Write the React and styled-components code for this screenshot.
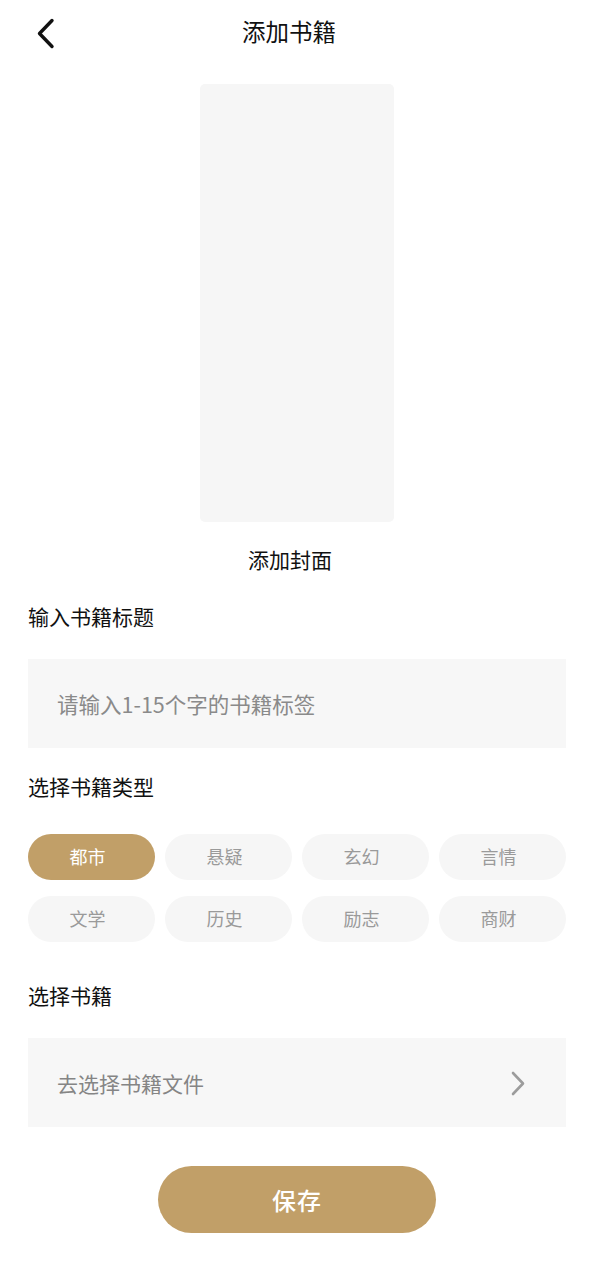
import React, { useState } from "react";
import styled, { createGlobalStyle } from "styled-components";

const Global = createGlobalStyle`
  html, body { margin: 0; padding: 0; background: #fff; }
  body { font-family: "Noto Sans CJK SC", "Noto Sans", sans-serif; color: #111; }
  * { box-sizing: border-box; }
`;

const Page = styled.div`
  width: 594px;
  min-height: 1280px;
  background: #fff;
  display: flex;
  flex-direction: column;
`;

const Header = styled.header`
  height: 66px;
  display: flex;
  align-items: center;
  justify-content: center;
  position: relative;
  padding-right: 16px;
`;

const BackButton = styled.button`
  position: absolute;
  left: 30px;
  top: 14px;
  width: 30px;
  height: 38px;
  border: none;
  background: none;
  padding: 0;
  display: flex;
  align-items: center;
  justify-content: center;
`;

const Title = styled.h1`
  margin: 0 0 4px;
  font-size: 23.5px;
  font-weight: 400;
  line-height: 30px;
  color: #111;
`;

const Content = styled.main`
  padding: 0 28px;
  display: flex;
  flex-direction: column;
`;

const CoverWrap = styled.div`
  display: flex;
  flex-direction: column;
  align-items: center;
  margin-top: 18px;
`;

const Cover = styled.div`
  width: 194px;
  height: 438px;
  border-radius: 5px;
  background: #f6f6f6;
`;

const CoverLabel = styled.div`
  margin-top: 23px;
  margin-right: 14px;
  font-size: 21px;
  line-height: 28px;
  color: #111;
`;

const Label = styled.div`
  margin-top: ${(p) => p.$mt}px;
  font-size: 21px;
  line-height: 28px;
  padding-bottom: 3px;
  color: #111;
`;

const Field = styled.div`
  margin-top: 26px;
  height: 89px;
  background: #f7f7f7;
  display: flex;
  align-items: center;
  justify-content: space-between;
  padding: 0 40px 0 29px;
  font-size: 21px;
  color: #858585;
`;

const Input = styled.input`
  border: none;
  outline: none;
  background: transparent;
  font-family: inherit;
  font-size: 21.5px;
  width: 100%;
  padding: 0;
  color: #333;
  &::placeholder { color: #8a8a8a; }
`;

const Chips = styled.div`
  margin-top: 31px;
  display: grid;
  grid-template-columns: repeat(4, 1fr);
  column-gap: 10px;
  row-gap: 16px;
`;

const Chip = styled.button`
  height: 46px;
  border: none;
  border-radius: 23px;
  background: ${(p) => (p.$active ? "#c19f68" : "#f6f6f6")};
  color: ${(p) => (p.$active ? "#fff" : "#9a9a9a")};
  font-family: inherit;
  font-size: 18px;
  padding: 0 8px 3px 0;
`;

const SaveButton = styled.button`
  margin: 39px auto 0;
  width: 278px;
  height: 67px;
  border: none;
  border-radius: 34px;
  background: #c19f68;
  color: #fff;
  font-family: inherit;
  font-size: 24px;
  font-weight: 500;
  letter-spacing: 1px;
  padding-bottom: 2px;
`;

const types = ["都市", "悬疑", "玄幻", "言情", "文学", "历史", "励志", "商财"];

export default function App() {
  const [active, setActive] = useState(0);
  return (
    <Page>
      <Global />
      <Header>
        <BackButton aria-label="返回">
          <svg width="30" height="38" viewBox="0 0 30 38">
            <polyline
              points="22,6.5 9.5,19.5 22,32.5"
              fill="none"
              stroke="#111"
              strokeWidth="3.4"
              strokeLinecap="round"
              strokeLinejoin="round"
            />
          </svg>
        </BackButton>
        <Title>添加书籍</Title>
      </Header>
      <Content>
        <CoverWrap>
          <Cover />
          <CoverLabel>添加封面</CoverLabel>
        </CoverWrap>
        <Label $mt={29}>输入书籍标题</Label>
        <Field>
          <Input placeholder="请输入1-15个字的书籍标签" />
        </Field>
        <Label $mt={24}>选择书籍类型</Label>
        <Chips>
          {types.map((t, i) => (
            <Chip key={t} $active={i === active} onClick={() => setActive(i)}>
              {t}
            </Chip>
          ))}
        </Chips>
        <Label $mt={39}>选择书籍</Label>
        <Field>
          <span>去选择书籍文件</span>
          <svg width="16" height="26" viewBox="0 0 16 26">
            <polyline
              points="3,3 13,13.5 3,24"
              fill="none"
              stroke="#9c9c9c"
              strokeWidth="2.6"
              strokeLinecap="round"
              strokeLinejoin="round"
            />
          </svg>
        </Field>
        <SaveButton>保存</SaveButton>
      </Content>
    </Page>
  );
}
